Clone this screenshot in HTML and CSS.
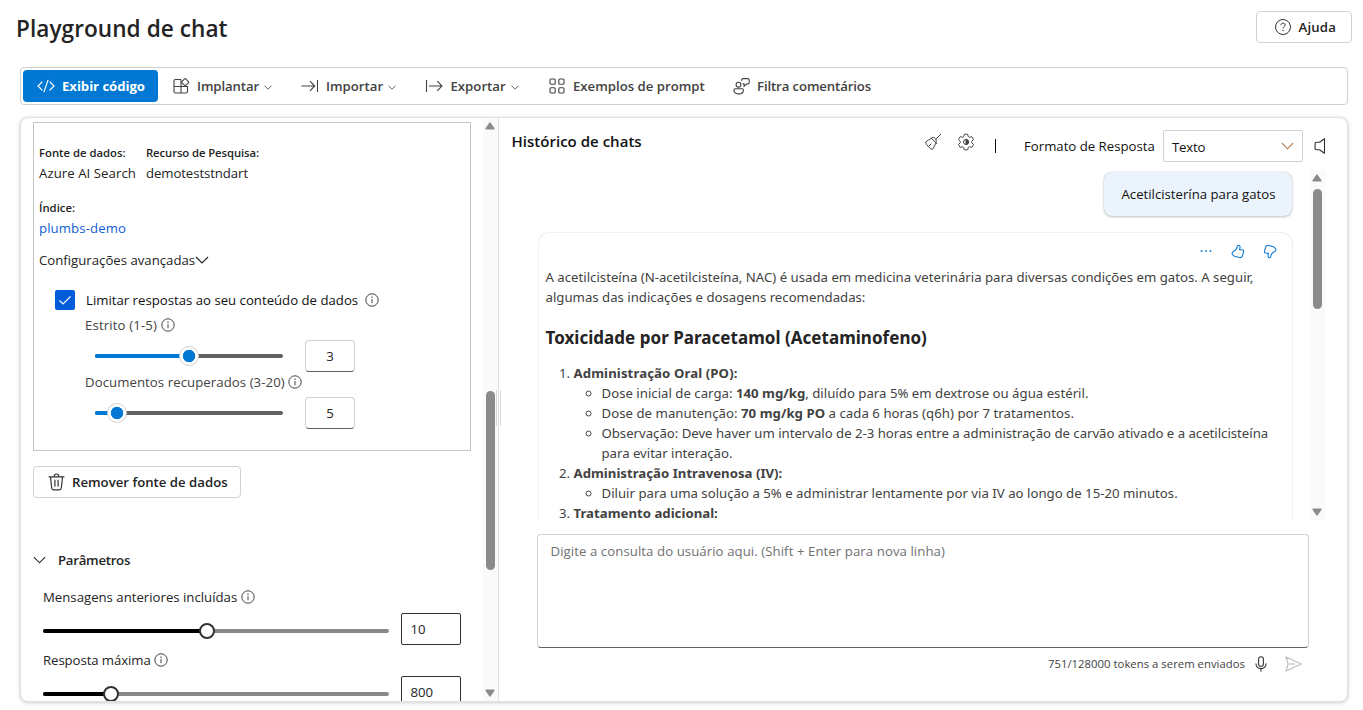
FILE: index.html
```html
<!DOCTYPE html>
<html lang="pt">
<head>
<meta charset="utf-8">
<title>Playground de chat</title>
<link rel="stylesheet" href="styles.css">
</head>
<body>
<svg class="defs" width="0" height="0">
  <symbol id="info" viewBox="0 0 14 14"><circle cx="7" cy="7" r="6.2" fill="none" stroke="currentColor"/><path d="M7 6v4.2" stroke="currentColor"/><circle cx="7" cy="4.2" r=".75" fill="currentColor"/></symbol>
  <symbol id="chev" viewBox="0 0 14 8"><path d="M1 1l6 6 6-6" fill="none" stroke="currentColor" stroke-width="1.2"/></symbol>
  <symbol id="minichev" viewBox="0 0 8 5"><path d="M.5 .7L4 4.200 7.500 .7" fill="none" stroke="currentColor"/></symbol>
  <symbol id="up" viewBox="0 0 10 8"><path d="M5 1.2L8.8 6.8H1.2z" fill="#8b8b8b" stroke="#8b8b8b" stroke-width="1.6" stroke-linejoin="round"/></symbol>
  <symbol id="thumb" viewBox="0 0 14 15"><path d="M7.4 1.2c1.4 0 1.8 1.100 1.600 2.400l-.5 2.100h2.300c1.400 0 2 .9 1.700 2.100l-1.100 4c-.4 1.400-1.600 2-3 1.700L3.700 12.300c-.7-.2-1-.5-1.300-1.100L1.300 10.400c-.5-1.300 0-2.500 1.300-3 2.400-1 3.300-2.800 3.800-5.200.1-.6.4-1 1-1z" fill="none" stroke="currentColor" stroke-width="1.100" stroke-linejoin="round"/></symbol>
</svg>

<header class="page-head">
  <h1>Playground de chat</h1>
  <button class="btn help">
    <svg width="18" height="18" viewBox="0 0 18 18" fill="none" stroke="#333"><circle cx="9" cy="9" r="7.5"/><path d="M6.900 7.200c0-1.300.9-2.100 2.100-2.100s2.100.8 2.100 1.900c0 1.500-2.100 1.700-2.100 3.500"/><circle cx="9" cy="12.500" r=".7" fill="#333" stroke="none"/></svg>
    <span>Ajuda</span>
  </button>
</header>

<nav class="toolbar">
  <button class="tool primary">
    <svg width="18" height="14" viewBox="0 0 18 14" fill="none" stroke="#fff" stroke-width="1.100" stroke-linecap="round"><path d="M5 3L1 7l4 4M13 3l4 4-4 4M11 1.200L7 12.800"/></svg>
    <span>Exibir código</span>
  </button>
  <button class="tool implantar">
    <svg width="17" height="17" viewBox="0 0 17 17" fill="none" stroke="#424242" stroke-width="1.100"><path d="M8 1.500H2.500C1.500 1.500 1 2 1 3V13.500c0 1 .5 1.500 1.500 1.500H13c1 0 1.500-.5 1.500-1.500V8.500H1M8 1.500V15"/><rect x="9.500" y="1.500" width="5.400" height="5.400" rx=".8" transform="rotate(45 12.200 4.200)" fill="#fff"/></svg>
    <span>Implantar</span><svg class="mini" width="8" height="5"><use href="#minichev"/></svg>
  </button>
  <button class="tool importar">
    <svg width="18" height="14" viewBox="0 0 18 14" fill="none" stroke="#424242" stroke-width="1.100"><path d="M.5 7h13M9 2.200L13.700 7 9 11.800M16.500 1v12"/></svg>
    <span>Importar</span><svg class="mini" width="8" height="5"><use href="#minichev"/></svg>
  </button>
  <button class="tool exportar">
    <svg width="18" height="14" viewBox="0 0 18 14" fill="none" stroke="#424242" stroke-width="1.100"><path d="M1.500 1v12M4 7h13M12.300 2.200L17 7l-4.700 4.800"/></svg>
    <span>Exportar</span><svg class="mini" width="8" height="5"><use href="#minichev"/></svg>
  </button>
  <button class="tool exemplos">
    <svg width="16" height="16" viewBox="0 0 16 16" fill="none" stroke="#424242" stroke-width="1.100"><rect x="1" y="1" width="5.200" height="5.200" rx="1"/><rect x="9.800" y="1" width="5.200" height="5.200" rx="1"/><rect x="1" y="9.800" width="5.200" height="5.200" rx="1"/><rect x="9.800" y="9.800" width="5.200" height="5.200" rx="1"/></svg>
    <span>Exemplos de prompt</span>
  </button>
  <button class="tool filtra">
    <svg width="17" height="17" viewBox="0 0 17 17" fill="none" stroke="#424242" stroke-width="1.100"><circle cx="5.500" cy="6.700" r="2.400"/><path d="M2.300 10.700h6.900c.8 0 1.200.4 1.200 1.200 0 2.500-1.700 4-4.700 4s-4.800-1.500-4.800-4c0-.8.500-1.200 1.400-1.200z"/><path d="M8.800 3V2c0-.9.500-1.400 1.400-1.400h4.600c.9 0 1.400.5 1.400 1.400v2.500c0 .9-.5 1.400-1.400 1.400h-.9l-2.800 2.400V5.900H9.600"/></svg>
    <span>Filtra comentários</span>
  </button>
</nav>

<main class="panel">
  <section class="setup">
    <div class="setup-body">
      <div class="source">
        <div class="pair">
          <div><div class="lbl">Fonte de dados:</div><div class="azure">Azure AI Search</div></div>
          <div><div class="lbl tight">Recurso de Pesquisa:</div><div class="tight">demoteststndart</div></div>
        </div>
        <div class="lbl index">Índice:</div>
        <a class="link">plumbs-demo</a>
        <div class="adv"><span>Configurações avançadas</span><svg width="14" height="8"><use href="#chev"/></svg></div>
        <div class="limit">
          <span class="check"><svg width="20" height="20" viewBox="0 0 20 20" fill="none" stroke="#fff" stroke-width="1.200"><path d="M4.500 10.500L8 14l7.500-7.500"/></svg></span>
          <span>Limitar respostas ao seu conteúdo de dados</span><svg class="info" width="14" height="14"><use href="#info"/></svg>
        </div>
        <div class="opt"><span class="estrito">Estrito (1-5)</span><svg class="info" width="14" height="14"><use href="#info"/></svg></div>
        <div class="slide">
          <div class="track"><i class="fill" style="width:50%"></i><i class="thumb"></i></div>
          <div class="num">3</div>
        </div>
        <div class="opt second"><span>Documentos recuperados (3-20)</span><svg class="info" width="14" height="14"><use href="#info"/></svg></div>
        <div class="slide">
          <div class="track"><i class="fill" style="width:11.764%"></i><i class="thumb"></i></div>
          <div class="num">5</div>
        </div>
      </div>
      <button class="btn remove">
        <svg width="17" height="18" viewBox="0 0 17 18" fill="none" stroke="#333" stroke-width="1.200" stroke-linecap="round"><path d="M1 3.800h15M6.200 3.500c0-1.500.9-2.500 2.300-2.500s2.300 1 2.300 2.500M2.500 4l1.200 11c.1 1.200.8 1.800 2 1.800h5.600c1.200 0 1.900-.6 2-1.800l1.200-11M6.900 7.200v6M10.100 7.200v6"/></svg>
        <span>Remover fonte de dados</span>
      </button>
      <div class="params"><svg width="13" height="8" viewBox="0 0 14 8"><use href="#chev"/></svg><span>Parâmetros</span></div>
      <div class="popt first"><span>Mensagens anteriores incluídas</span><svg class="info" width="14" height="14"><use href="#info"/></svg></div>
      <div class="pslide">
        <div class="track dark"><i class="fill" style="width:47.400%"></i><i class="thumb"></i></div>
        <div class="pnum">10</div>
      </div>
      <div class="popt"><span class="tight">Resposta máxima</span><svg class="info" width="14" height="14"><use href="#info"/></svg></div>
      <div class="pslide">
        <div class="track dark"><i class="fill" style="width:19.700%"></i><i class="thumb"></i></div>
        <div class="pnum">800</div>
      </div>
    </div>
    <div class="scroll left">
      <svg width="10" height="8"><use href="#up"/></svg>
      <i class="bar"></i>
      <svg class="down" width="10" height="8"><use href="#up"/></svg>
    </div>
    <i class="grip"></i>
  </section>

  <section class="chat">
    <div class="chat-head">
      <h2>Histórico de chats</h2>
      <svg class="broom" width="18" height="18" viewBox="0 0 18 18" fill="none" stroke="#444" stroke-width="1"><path d="M17 1l-5.300 5.300M7 4.900l6 6M8.200 4.600c1-.5 2-.2 2.900.7.900.9 1.500 2 .9 4.700L8.500 16.500C5.600 15.300 2.700 12.500 1.400 9.100zM5 13l2.300-2.300"/></svg>
      <svg class="gear" width="18" height="18" viewBox="0 0 18 18" fill="none" stroke="#444" stroke-width="1"><path d="M7.300 1.300Q9 .8 10.700 1.300l.5 2.200 1.300.8 2.200-.7q1.300 1.300 1.700 3L14.800 8.200v1.600l1.600 1.600q-.4 1.700-1.700 3l-2.200-.7-1.300.8-.5 2.200q-1.700.5-3.400 0l-.5-2.200-1.300-.8-2.200.7q-1.300-1.300-1.700-3l1.600-1.600V8.200L1.600 6.600q.4-1.700 1.700-3l2.200.7 1.300-.8z" stroke-linejoin="round"/><circle cx="9" cy="9" r="2.500"/><path d="M9 6.500a2.500 2.500 0 010 5z" fill="#444"/></svg>
      <i class="sep"></i>
      <span class="fmt">Formato de Resposta</span>
      <div class="select"><span>Texto</span><svg width="13" height="8" viewBox="0 0 14 8"><use href="#chev"/></svg></div>
      <svg class="speaker" width="12" height="18" viewBox="0 0 12 18" fill="none" stroke="#333" stroke-width="1.100"><path d="M10.500 1.700v14.600L5.500 12.700H2.300c-.8 0-1.200-.4-1.200-1.200v-5c0-.8.400-1.200 1.200-1.200h3.200z" stroke-linejoin="round"/></svg>
    </div>

    <div class="history">
      <div class="messages">
        <div class="user">Acetilcisterína para gatos</div>
        <article class="bot">
          <div class="actions">
            <svg width="12" height="4" viewBox="0 0 12 4" fill="#0f7bd4"><circle cx="1.500" cy="2" r=".95"/><circle cx="6" cy="2" r=".95"/><circle cx="10.500" cy="2" r=".95"/></svg>
            <svg width="14" height="15"><use href="#thumb"/></svg>
            <svg class="flip" width="14" height="15"><use href="#thumb"/></svg>
          </div>
          <p>A acetilcisteína (N-acetilcisteína, NAC) é usada em medicina veterinária para diversas condições em gatos. A seguir, algumas das indicações e dosagens recomendadas:</p>
          <h3>Toxicidade por Paracetamol (Acetaminofeno)</h3>
          <ol>
            <li><b class="oral">Administração Oral (PO):</b>
              <ul>
                <li>Dose inicial de carga: <b>140 mg/kg</b>, diluído para 5% em dextrose ou água estéril.</li>
                <li class="dose">Dose de manutenção: <b>70 mg/kg PO</b> a cada 6 horas (q6h) por 7 tratamentos.</li>
                <li class="obs">Observação: Deve haver um intervalo de 2-3 horas entre a administração de carvão ativado e a acetilcisteína<br>para evitar interação.</li>
              </ul>
            </li>
            <li><b>Administração Intravenosa (IV):</b>
              <ul><li>Diluir para uma solução a 5% e administrar lentamente por via IV ao longo de 15-20 minutos.</li></ul>
            </li>
            <li><b>Tratamento adicional:</b></li>
          </ol>
        </article>
      </div>
      <div class="scroll right">
        <svg width="10" height="8"><use href="#up"/></svg>
        <i class="bar"></i>
        <svg class="down" width="10" height="8"><use href="#up"/></svg>
      </div>
    </div>

    <div class="prompt">Digite a consulta do usuário aqui. (Shift + Enter para nova linha)</div>
    <div class="foot">
      <span>751/128000 tokens a serem enviados</span>
      <svg class="mic" width="12" height="16" viewBox="0 0 12 16" fill="none" stroke="#333" stroke-width="1.100" stroke-linecap="round"><rect x="3.600" y=".7" width="4.800" height="9.600" rx="2.400"/><path d="M1 7.800c0 3 2 4.800 5 4.800s5-1.800 5-4.800M6 12.600v2.700"/></svg>
      <svg width="17" height="16" viewBox="0 0 17 16" fill="none" stroke="#bdbdbd" stroke-width="1.100" stroke-linejoin="round"><path d="M1 .9L16.200 8 1 15.100 3 8zM3 8h7"/></svg>
    </div>
  </section>
</main>
</body>
</html>
```
FILE: styles.css
```css
* { box-sizing: border-box; }
body {
  margin: 0;
  height: 710px;
  overflow: hidden;
  background: #fff;
  color: #242424;
  font: 13.2px/20px "Open Sans", "Noto Sans", sans-serif;
}
svg { display: block; flex: none; overflow: visible; }
.defs { position: absolute; }
h1, h2, h3, p { margin: 0; }
button { font: inherit; margin: 0; padding: 0; background: none; border: 0; color: inherit; display: flex; align-items: center; white-space: nowrap; }

.page-head { display: flex; justify-content: space-between; align-items: flex-start; height: 67px; padding: 11px 11px 0 16px; }
h1 { font-size: 22.6px; line-height: 36px; font-weight: 600; letter-spacing: .05px; }
.btn { height: 32px; border: 1px solid #d1d1d1; border-radius: 4px; font-weight: 600; background: #fff; }
.help { width: 96px; padding-left: 17px; gap: 6.5px; letter-spacing: .2px; }

.toolbar { display: flex; height: 38px; margin: 0 15px 0 20px; padding: 2px; border: 1px solid #d1d1d1; border-radius: 4px; color: #424242; }
.tool { height: 32px; font-weight: 600; }
.primary { width: 135px; padding-left: 14px; gap: 7px; background: #0078d4; color: #fff; border-radius: 4px; font-weight: 700; letter-spacing: -.06px; }
.mini { margin: 3px 0 0 5px; color: #616161; }
.implantar { width: 129px; padding-left: 15px; letter-spacing: -.12px; }
.implantar span { margin-left: 7px; }
.importar { width: 124px; padding-left: 14px; }
.importar span { margin-left: 7px; }
.exportar { width: 123px; padding-left: 14px; }
.exportar span { margin-left: 7.5px; }
.exemplos { width: 184px; padding-left: 15px; gap: 8px; }
.filtra { padding-left: 15px; gap: 7px; letter-spacing: -.12px; }

.panel { display: flex; height: 585px; margin: 12px 15px 0 20px; border: 1px solid #e0e0e0; border-radius: 8px; background: #fff; box-shadow: 0 1px 4px rgba(0,0,0,.2); overflow: hidden; }
.setup { position: relative; display: flex; width: 478px; border-right: 1px solid #e0e0e0; }
.setup-body { flex: 1; height: 583px; overflow: hidden; padding: 4px 0 0 12px; }
.source { width: 438px; height: 329px; padding: 20px 0 0 5px; border: 1px solid #c4c4c4; }
.pair { display: flex; gap: 10px; }
.lbl { font-size: 11.3px; font-weight: 600; }
.tight { letter-spacing: -.08px; }
.azure { letter-spacing: .06px; }
.index { margin-top: 15px; }
.link { display: block; color: #115ed4; letter-spacing: .1px; }
.adv { display: flex; align-items: center; margin-top: 12px; color: #242424; }
.limit { display: flex; align-items: center; margin: 20px 0 0 16px; color: #111; }
.check { width: 20px; height: 20px; margin-right: 11px; border-radius: 2px; background: #015cda; }
.info { margin-left: 7px; color: #424242; }
.opt { display: flex; align-items: center; margin: 5px 0 0 46px; color: #424242; letter-spacing: .07px; }
.opt .info, .popt .info { margin-left: 3.5px; }
.opt.second { margin-top: 0; }
.estrito { letter-spacing: .14px; }
.slide { display: flex; align-items: center; height: 32px; margin: 5px 0 0 56px; }
.track { position: relative; display: flex; align-items: center; width: 188px; height: 4px; border-radius: 2px; background: #616161; }
.fill { height: 4px; border-radius: 2px 0 0 2px; background: #0078d4; }
.thumb { flex: none; width: 20px; height: 20px; margin: 0 -10px; border: 1px solid #d1d1d1; border-radius: 50%; background: radial-gradient(circle, #0078d4 5.8px, #fff 6.6px); }
.num { width: 50px; height: 32px; margin-left: 22px; border: 1px solid #d1d1d1; border-bottom-color: #616161; border-radius: 4px; line-height: 31px; text-align: center; }
.remove { width: 208px; margin-top: 15px; padding-left: 13.5px; gap: 7.5px; }
.params { display: flex; align-items: center; margin-top: 52px; gap: 12px; font-weight: 600; letter-spacing: -.26px; }
.popt { display: flex; align-items: center; margin: 5px 0 0 10px; color: #242424; }
.popt.first { margin-top: 17px; }
.pslide { display: flex; align-items: center; height: 32px; margin: 6px 0 0 10px; }
.dark { width: 346px; top: 2px; background: #8a8886; }
.dark .fill { background: #000; }
.dark .thumb { width: 16px; height: 16px; margin: 0 -8px; border: 2px solid #333; background: #fff; }
.pnum { width: 60px; height: 32px; margin-left: 12px; padding-left: 8.5px; border: 1px solid #323130; border-radius: 2px; line-height: 30px; }

.scroll { display: flex; flex-direction: column; align-items: center; width: 15px; background: #fafafa; }
.scroll .bar { width: 9px; border-radius: 5px; background: #8b8b8b; }
.scroll svg { margin-left: -1px; }
.down { margin-top: auto; transform: rotate(180deg); }
.left { padding: 4px 0 4px; }
.left .bar { height: 179px; margin-top: 261px; }
.grip { position: absolute; right: -3px; top: 272px; width: 5px; height: 36px; border: solid #d6d6d6; border-width: 0 1px; }

.chat { flex: 1; padding-left: 12px; }
.chat-head { display: flex; align-items: center; height: 52px; color: #111; padding-top: 4px; }
h2 { width: 413px; margin-top: -10px; padding-left: .5px; font-size: 15px; line-height: 24px; font-weight: 600; color: #111; letter-spacing: .02px; }
.broom { margin-top: -8px; }
.gear { margin: -8px 0 0 15px; }
.sep { width: 1px; height: 14px; margin: 0 0 0 20px; background: #111; }
.fmt { width: 139px; margin-left: 28px; }
.select { display: flex; align-items: center; justify-content: space-between; width: 140px; height: 32px; padding: 1px 8.5px 0 8px; border: 1px solid #d1d1d1; border-radius: 2px; letter-spacing: -.2px; }
.select svg { color: #b0703a; margin-top: -2px; }
.speaker { margin-left: 11px; }

.history { display: flex; height: 350px; padding-left: 27px; }
.messages { width: 772px; height: 350px; overflow: hidden; padding: 2px 18px 0 0; }
.user { width: 188px; height: 44px; margin-left: auto; padding-left: 1px; border-radius: 8px; background: #ebf3fc; box-shadow: 0 0 1px rgba(0,0,0,.25), 0 1px 3px rgba(0,0,0,.22); color: #111; line-height: 44px; text-align: center; }
.bot { height: 360px; margin: 17px 0 0 1px; padding: 8px 7px 0 6.5px; border-radius: 10px; background: #fff; box-shadow: 0 0 2px rgba(0,0,0,.22); color: #424242; font-family: "Noto Sans", "Open Sans", sans-serif; }
.actions { display: flex; align-items: center; justify-content: flex-end; gap: 18px; height: 20px; margin-bottom: 6px; padding-right: 8px; color: #0f7bd4; }
.actions svg:first-child { margin-right: 1px; }
.flip { transform: rotate(180deg); }
.bot p { width: 720px; }
.bot h3 { margin: 19px 0 13px; color: #242424; font-size: 17px; line-height: 24px; letter-spacing: .03px; }
.bot ol, .bot ul { margin: 0; padding-left: 28px; }
.bot li { white-space: nowrap; letter-spacing: .01px; }
.bot ul { list-style: circle; }
.bot .oral { letter-spacing: .1px; }
.bot .dose { letter-spacing: .035px; }
.bot .obs { letter-spacing: -.02px; }

.right { padding: 4px 0 4px; }
.right .bar { height: 120px; margin-top: 7px; }

.prompt { width: 772px; height: 114px; margin: 14px 0 0 26px; padding: 6px 12.5px; border: 1px solid #d1d1d1; border-bottom-color: #616161; border-radius: 4px; color: #707070; letter-spacing: .075px; }
.foot { display: flex; align-items: center; justify-content: flex-end; height: 32px; padding-right: 45px; color: #424242; font-size: 11.3px; letter-spacing: .03px; }
.mic { margin: 0 18px 0 10px; }
```
